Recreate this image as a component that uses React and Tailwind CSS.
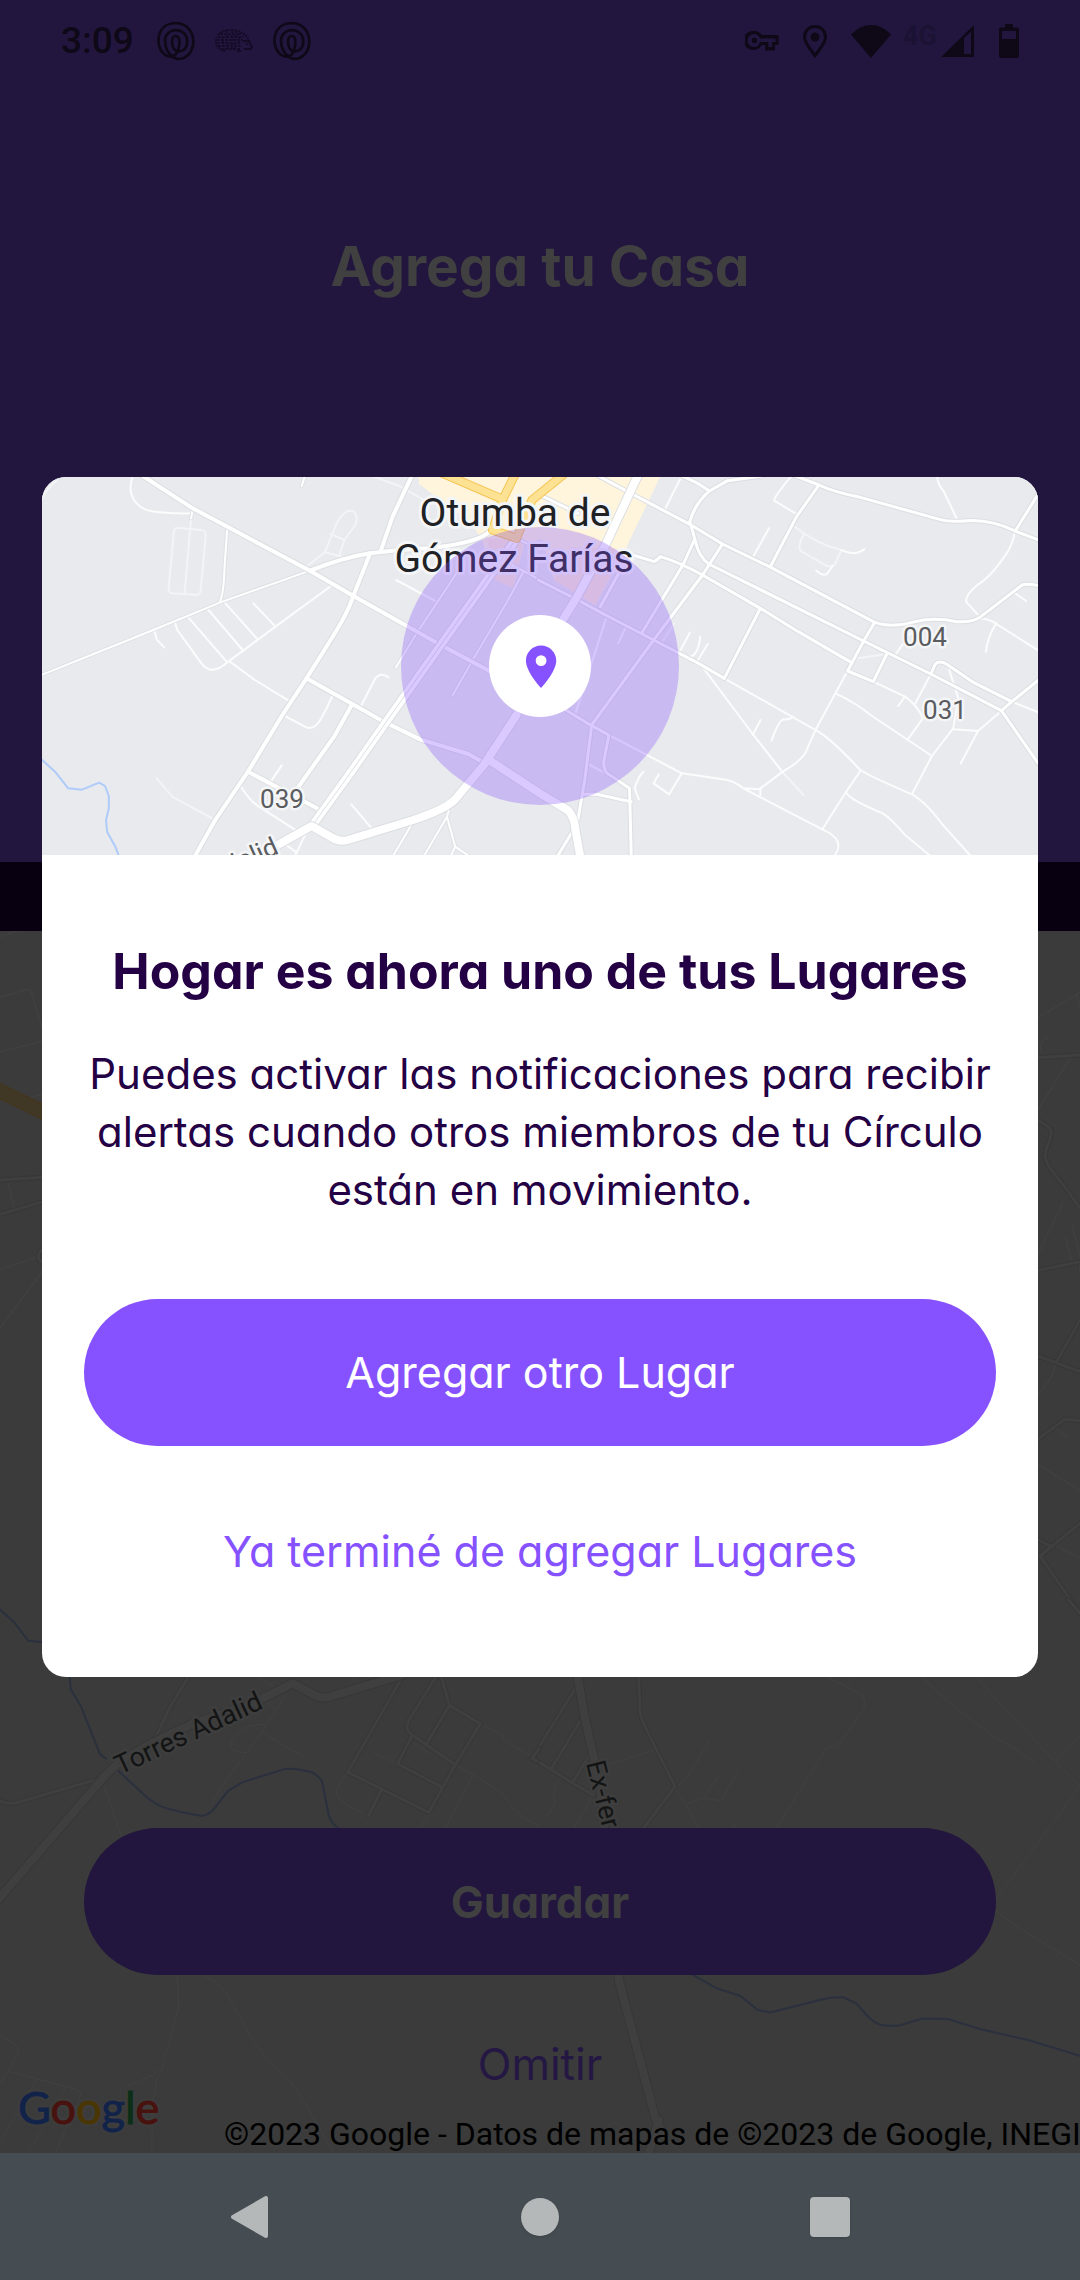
import React from 'react';

const ROBOTO = "font-['Roboto',sans-serif]";
const BRAND = "font-['Inter',sans-serif] [font-feature-settings:'cv11']";

function Roads({ paths, color, casing, width, transform }) {
  return (
    <g transform={transform} fill="none" strokeLinejoin="round" strokeLinecap="round">
      {casing && paths.map((d, i) => (
        <path key={'c' + i} d={d} stroke={casing} strokeWidth={width + 2} vectorEffect="non-scaling-stroke" />
      ))}
      {paths.map((d, i) => (
        <path key={i} d={d} stroke={color} strokeWidth={width} vectorEffect="non-scaling-stroke" />
      ))}
    </g>
  );
}

/* ---------- street data for the place preview ---------- */
const WEST = 'translate(-42 -17) scale(0.34436 0.33333)';
const EAST = 'translate(498 -17) scale(0.34436 0.33333)';

const westMain = [
  'M410 45 L560 145 L900 332 L1025 407 L1280 555 L1425 635',
  'M1197 45 L1140 170 L1105 275',
  'M1075 280 L1025 410 Q1010 460 960 540 L890 655 L820 765 L720 935 L625 1080 L565 1190',
  'M900 332 Q1000 292 1075 280 Q1150 270 1240 265 Q1390 250 1425 212',
  'M890 655 L1120 788 L1220 838 L1360 882 L1405 908',
  'M720 935 L930 1050',
  'M1020 737 L970 830 L860 990',
];
const westMid = [
  'M1335 325 L1210 520 L1150 622',
  'M1520 335 L1470 430 L1370 605 L1315 705',
  'M1480 310 L1568 360 M1500 235 L1568 270',
  'M1200 1085 L1140 1190 M1298 1070 L1230 1190',
  'M1308 1035 L1298 1070 L1322 1160 L1365 1190 M1322 1160 L1308 1190',
  'M120 645 L445 510 L640 427 L900 332',
  'M660 205 L652 320 Q650 400 638 427',
  'M560 145 L555 175 M885 50 L876 78',
];
const westThin = [
  'M385 50 C365 110 400 150 450 155 Q500 162 555 160',
  'M965 375 L800 500 L660 607 Q615 650 585 610 L515 510 L508 488',
  'M545 470 L660 607 M603 447 L707 573 M652 427 L748 538 M736 430 L800 500',
  'M448 510 L455 538 L477 562',
  'M668 605 L740 660 L842 724',
  'M822 765 L890 802 Q912 810 930 780 Q950 745 965 708',
  'M1045 745 L1090 655 Q1105 635 1128 652',
  'M785 967 L818 916 M700 980 Q730 1030 760 1045 L870 1118 M1020 1033 L1077 1102',
  'M1150 360 L1272 427 M835 1158 L862 1178 M888 1120 L858 1185',
];
const westFaint = [
  'M515 203 L585 210 Q600 212 597 230 L583 390 Q582 405 568 404 L500 400 Q488 398 490 380 L505 215 Q507 203 515 203',
  'M555 175 L536 400',
  'M888 322 L943 277 L968 215 C1000 120 1050 150 1032 195 L1000 240 L985 287 M943 277 L1000 292 M960 222 L1000 240',
  'M455 955 L500 1010 L625 1080',
  'M1085 50 L1160 78 L1240 125 M120 120 Q135 85 165 62',
];
const eastMain = [
  'M170 48 L260 98 L430 190 L530 252 L670 322 L972 487 Q1020 505 1080 487 Q1140 470 1210 485 Q1255 488 1280 470 L1400 375 Q1415 370 1448 377',
  'M735 45 L810 75 Q850 95 930 112 L1160 178 Q1190 187 1240 182 Q1310 178 1380 213 L1448 240',
  'M412 48 Q455 65 492 93 L545 62 L645 48',
  'M492 93 Q450 130 435 185 Q442 210 450 238 Q460 290 490 312 L940 543 L1135 642 L1340 752 L1448 912',
  'M340 300 L350 290 Q400 305 472 345 L640 445 L750 515 L900 605',
  'M810 75 L745 170 L670 318',
  'M972 487 L940 543 L893 633 L968 665 L1007 582',
  'M640 445 L535 655',
  'M-5 360 L110 420 L190 465 L330 540 L455 607 L535 655',
  'M530 252 L472 345 L330 540 L150 795',
  'M448 240 L415 315 L295 520',
  'M1340 752 L1370 725 L1448 660 M1448 100 L1380 213',
  'M1135 642 L1148 612 Q1160 600 1180 612 L1260 668 L1370 725',
  'M270 285 L332 305 L350 290',
  'M130 1003 L165 1003 L265 1025',
  'M75 750 L150 797 L200 825 L185 905 Q185 930 195 940 L260 985 L265 1190',
  'M150 797 L130 960 L110 1080 M100 1105 L50 1190',
  'M250 300 L175 440 M0 105 L110 160',
];
const eastThin = [
  'M1380 213 Q1370 260 1355 280 Q1310 350 1270 375 Q1235 405 1237 425 L1277 470',
  'M1153 48 Q1155 75 1172 93 L1212 180',
  'M730 48 Q680 110 680 122 L750 165',
  'M408 55 L362 150 M665 205 L618 292 M1380 400 L1412 423',
  'M893 633 L800 810 L770 880 Q755 905 705 935 L640 985 L640 1005',
  'M475 625 L620 825 L705 937 M535 655 L800 810 Q840 830 930 930 Q960 950 1080 1003 Q1120 1025 1170 1095 L1250 1187',
  'M858 700 Q920 730 960 765 L1138 888 L1080 1003',
  'M968 665 L1060 710 Q1095 735 1112 775 L1068 838 M1060 710 L1040 738',
  'M1135 642 L1090 730 M1188 628 L1215 715 L1200 805 L1138 888 M1200 808 L1272 813 L1340 752 M1272 813 L1222 910',
  'M932 930 L888 997 L820 1108',
  'M888 997 Q900 1020 995 1060 Q1020 1075 1060 1125 L1133 1187',
  'M200 825 L412 940 L530 958 Q560 960 590 985 L820 1108 Q890 1140 855 1187 M590 985 L640 988',
  'M412 940 L375 1003 L330 970 L345 943 M300 935 Q285 950 275 985 L287 1018',
  'M735 770 Q725 780 705 778 Q690 790 672 842 M640 780 L618 825',
  'M875 270 Q910 290 942 268 M802 332 Q830 355 838 335 L850 318',
  'M1325 490 Q1300 530 1295 575 M1277 475 Q1310 478 1330 495 L1448 572 M1030 587 L1090 500',
  'M435 518 L405 577 M465 530 Q460 590 430 592 M487 552 L455 607 M1370 725 L1448 757',
  'M195 465 L100 770 M250 500 L227 550 M140 912 L190 940',
];
const eastFaint = [
  'M740 200 Q800 250 875 270 L855 315 Q840 325 820 310 L760 275 Q745 265 765 225',
  'M705 937 L765 1005 M390 490 L355 545 M890 600 L1007 582',
];

function PreviewMap() {
  return (
    <svg className="absolute inset-0 h-full w-full" viewBox="0 0 996 378" preserveAspectRatio="xMidYMid slice" aria-hidden="true">
      <rect width="996" height="378" fill="#e8eaed" />
      <path d="M377 0 H618 L584 71 L553 128 L512 103 L500 62 L482 66 L471 111 L450 101 L440 62 L428 45 L377 7Z" fill="#fef5dc" />
      <path d="M446 62 L482 62 L471 111 L450 101Z M528 70 L582 72 L553 128 L512 103Z" fill="#fcebd6" />
      <Roads transform={WEST} paths={westFaint} color="#f3f4f6" width={2} />
      <Roads transform={EAST} paths={eastFaint} color="#f3f4f6" width={2} />
      <Roads transform={WEST} paths={westThin} color="#fcfcfd" width={2} />
      <Roads transform={EAST} paths={eastThin} color="#fcfcfd" width={2} />
      <Roads transform={WEST} paths={westMid} color="#ffffff" casing="#dfe1e5" width={2} />
      <Roads transform={EAST} paths={eastMain} color="#ffffff" casing="#dcdee2" width={3} />
      <Roads transform={WEST} paths={westMain} color="#ffffff" casing="#dcdee2" width={4} />
      <Roads transform={WEST} paths={['M1500 235 L1280 555 L1120 788 L1020 935 L908 1095']} color="#ffffff" casing="#dcdee2" width={8} />
      <Roads transform={WEST} paths={['M1490 250 L1280 555 L1120 788 L1020 935 L912 1090']} color="#dcdee2" width={1} />
      <Roads transform={EAST} paths={['M285 45 L190 255 L105 415 L60 490']} color="#ffffff" casing="#dcdee2" width={8} />
      <Roads
        transform={WEST}
        paths={[
          'M780 1170 L905 1098 L965 1133 Q985 1147 1010 1140 L1200 1080 Q1290 1050 1320 1020 L1405 915 L1500 765',
          'M1420 900 L1568 1000 L1648 1050 Q1668 1070 1671 1110 L1685 1190',
        ]}
        color="#ffffff"
        casing="#dcdee2"
        width={8}
      />
      <Roads transform={WEST} paths={['M1285 40 L1460 118 L1495 45', 'M1460 118 L1430 210 L1500 235 L1545 120 L1635 45']} color="#fde293" casing="#f6c453" width={7} />
      <Roads transform={WEST} paths={['M120 898 L160 935 L198 985 L238 989 L288 968 L305 978 L316 1008 L316 1045 L308 1080 L311 1115 L335 1160 L346 1190']} color="#aecbfa" width={2} />
      <g className={ROBOTO} textAnchor="middle" stroke="#f4f5f7" strokeLinejoin="round" style={{ paintOrder: 'stroke' }}>
        <g fill="#202124" fontSize="39" strokeWidth="6">
          <text x="473" y="49">Otumba de</text>
          <text x="472" y="95">Gómez Farías</text>
        </g>
        <g fill="#5a5c60" fontSize="26" strokeWidth="5">
          <text x="240" y="331">039</text>
          <text x="883" y="169">004</text>
          <text x="903" y="242">031</text>
          <text x="238" y="376" textAnchor="end" transform="rotate(-24 238 376)">Torres Adalid</text>
        </g>
      </g>
    </svg>
  );
}

/* ---------- street data for the full map behind the dialog ---------- */
const SW = 'translate(0 669) scale(0.34436 0.43367)';
const SE = 'translate(540 669) scale(0.34436 0.43367)';
const LEFT_EDGE = 'translate(0 -11) scale(0.33333)';
const RIGHT_EDGE = 'translate(1030 -11) scale(0.33333)';
const RIGHT_EDGE_LOW = 'translate(1030 489) scale(0.33333)';
const ROAD = '#403f40';
const CASE = '#363736';

function BackgroundMap() {
  return (
    <svg className="absolute inset-0 h-full w-full" viewBox="0 0 1080 1222" preserveAspectRatio="xMidYMax slice" aria-hidden="true">
      <rect width="1080" height="1222" fill="#3a3b3a" />
      <Roads transform={LEFT_EDGE} color={ROAD} width={2} paths={['M0 50 L50 34', 'M0 232 L75 210 Q92 206 97 225 L130 335', 'M0 396 L130 362 M90 533 L130 522', 'M24 785 L43 868', 'M0 1048 L110 1013', 'M130 1050 L0 1225']} />
      <Roads transform={LEFT_EDGE} color={ROAD} casing={CASE} width={3} paths={['M0 780 L130 772', 'M0 883 L130 845', 'M130 985 Q100 1012 130 1030']} />
      <Roads transform={LEFT_EDGE} color="#403825" casing="#46351a" width={13} paths={['M-20 504 L150 586']} />
      <Roads transform={RIGHT_EDGE} color={ROAD} width={2} paths={['M20 295 L150 218 M140 225 L150 260', 'M50 353 L30 370 L38 412', 'M125 408 L20 575', 'M98 850 L20 1010', 'M125 908 L150 1010 M107 950 L125 1025', 'M150 1030 L150 1060', 'M78 1328 Q70 1380 20 1425', 'M78 1525 L112 1555']} />
      <Roads transform={RIGHT_EDGE} color={ROAD} casing={CASE} width={3} paths={['M20 413 L150 405', 'M20 600 C60 620 75 625 55 670 Q35 710 60 745 L110 808 L150 865', 'M20 1052 L150 1025', 'M150 1200 L78 1328 M20 1307 L150 1355', 'M20 1560 L105 1498 L150 1502']} />
      <Roads transform={RIGHT_EDGE_LOW} color={ROAD} width={2} paths={['M20 130 L150 212 M75 375 L150 415']} />
      <Roads transform={RIGHT_EDGE_LOW} color={ROAD} casing={CASE} width={3} paths={['M20 357 L68 382 M150 310 L30 408 L150 580']} />

      <Roads
        transform={SW}
        color="#424142"
        width={1}
        paths={[
          'M750 178 L805 205 M770 235 L800 252 M828 222 L790 270 L760 305 L700 370 Q640 430 612 473',
          'M770 286 L725 290 Q665 315 670 340 Q680 352 715 352 M760 305 L883 363',
          'M303 430 L352 545 M515 865 L519 937 Q500 1000 480 1050 Q470 1090 455 1105 L442 1170 L441 1280',
          'M592 865 Q640 885 660 910 L725 1003 Q765 1055 845 1110 Q880 1150 970 1277',
          'M0 1005 Q60 1025 55 1045 L0 1115 M25 1087 L215 1127 Q240 1133 232 1145 L160 1277',
          'M0 1250 L105 1108 M80 1277 L190 1125 M462 1085 Q440 1100 370 1120',
          'M1010 397 Q970 435 978 450 Q990 470 1057 493 M1087 352 L1155 378 M1200 330 L1250 355',
          'M1395 285 L1455 310 L1465 325 L1568 370 M1322 380 L1375 402 L1460 447 Q1500 500 1568 522 M1375 402 L1292 527 M1245 490 L1220 527',
          'M1020 178 L1035 190 M355 330 L370 350',
        ]}
      />
      <Roads
        transform={SW}
        color={ROAD}
        casing={CASE}
        width={3}
        paths={[
          'M547 178 L495 245 L450 320', 'M0 463 Q25 473 50 467 L290 412',
          'M1168 178 L1010 397 L1245 490 L1322 380 L1395 285 L1305 243 L1282 178',
          'M1265 178 L1185 280 Q1175 295 1195 310 L1322 380', 'M1305 243 L1240 330 M1195 315 L1155 378 L1285 432 M1108 437 L1070 497 M1568 340 L1545 365 L1568 375',
        ]}
      />
      <Roads transform={SW} color={ROAD} casing={CASE} width={8} paths={['M-10 695 L305 405 L345 375 Q420 335 560 285 L730 240 L850 192 L920 222 Q945 228 970 220 L1170 172']} />
      <Roads
        transform={SE}
        color="#424142"
        width={1}
        paths={[
          'M205 378 L335 345 M492 323 L435 400 Q420 425 390 430 L462 525 M425 470 L475 457 L525 463 L575 395 M475 457 L522 403',
          'M835 178 L925 215 Q950 225 940 250 L880 320 Q870 335 830 343 L688 525 M905 180 L890 195',
          'M1112 178 Q1160 225 1330 322 Q1370 335 1440 378', 'M1270 178 Q1330 240 1568 430 L1325 688 M1497 372 L1568 315', 'M1325 717 Q1360 742 1410 765 L1568 842',
          'M60 410 Q30 435 45 465 Q35 490 10 502 M150 455 L100 525', 'M195 1215 Q215 1195 240 1215 Q280 1230 270 1240 M145 1277 L185 1240 M350 1235 L418 1277', 'M570 515 L560 525',
        ]}
      />
      <Roads
        transform={SE}
        color={ROAD}
        casing={CASE}
        width={3}
        paths={['M287 178 L290 255 Q295 280 310 300 L392 430 L300 527', 'M102 205 L0 335 M120 275 L32 390 M0 375 L100 425 L155 450 M145 355 L95 420', 'M1535 0 L1568 30']}
      />
      <Roads transform={SE} color={ROAD} casing={CASE} width={8} paths={['M108 170 L130 270 L175 430 L230 880 L335 1195 L360 1235 M345 1200 L315 1277']} />
      <Roads transform={SW} color="#2b303e" width={2} paths={['M0 22 L42 52 L82 94 L122 97', 'M203 178 L205 205 L235 245 L290 355 L308 366', 'M345 395 L415 447 Q440 465 460 473 Q500 487 588 498 Q605 495 618 485 L662 440 L705 420 L825 390 Q850 386 905 397 Q925 405 935 418 L955 497 Q965 518 985 527']} />
      <Roads transform={SE} color="#2b303e" width={2} paths={['M445 865 L512 895 L582 913 L632 945 L668 951 L790 927 Q835 915 880 916 L918 930 L958 965 Q980 980 1005 982 L1040 982 L1110 965 L1185 966 L1280 990 L1420 1015 L1568 1051']} />
      <g className={ROBOTO} fill="#131414" fontSize="27" stroke="#3e3e3e" strokeWidth="5" strokeLinejoin="round" style={{ paintOrder: 'stroke' }}>
        <text x="120" y="844" transform="rotate(-25 120 844)">Torres Adalid</text>
        <text x="586" y="832" transform="rotate(76 586 832)">Ex-ferrocarril</text>
      </g>
    </svg>
  );
}

/* ---------- status bar icons ---------- */
function LoopIcon() {
  return (
    <svg className="h-10 w-10" viewBox="0 0 40 40" fill="none" stroke="currentColor" strokeWidth="2.6" strokeLinecap="round" aria-hidden="true">
      <path d="M22 30.5 C30 30 32 24 31 18 C29 6 10 6 9 19 C9 27 11 32 17 35.500" />
      <path d="M22 30.500 C15 29 14 14 20 15 C26 16 23 29 20 33 C18 36 13 37 8 33 C-2 24 1 2 20 2 C43 3 42 37 23 38 C20 38 18 37 16 35" />
    </svg>
  );
}

function HedgehogIcon() {
  return (
    <svg className="h-6 w-10" viewBox="0 0 40 24" fill="none" stroke="currentColor" strokeWidth="1.400" aria-hidden="true">
      <path strokeWidth="2" strokeDasharray="2 1" d="M11 22 C3 21 0 14 3 8 M4 6 C10 -1 22 0 28 4 C32 6 34 9 35 12" />
      <path strokeDasharray="3 1" d="M6 5 H26 M4 8 H29 M3 11 H29 M3 14 H27 M4 17 H27 M7 20 H26" />
      <path strokeDasharray="2 2" strokeWidth="1.500" d="M8 4 L10 21 M13 2 L14 22 M18 2 V20 M22 2 L21 22 M26 4 L25 21" />
      <path d="M29 12 H35 L38 18 L37 20 H30 M27 22 H23" strokeWidth="2" />
      <circle cx="33" cy="15" r="1" fill="currentColor" stroke="none" />
    </svg>
  );
}

function StatusBar() {
  return (
    <div className="flex h-[82px] items-center justify-between px-[61px] text-[#0e0817]">
      <div className="flex items-center gap-[18px]">
        <span className={`${ROBOTO} mr-1 text-[37px] leading-10 font-medium`}>3:09</span>
        <LoopIcon />
        <span className="text-[#150b26]"><HedgehogIcon /></span>
        <LoopIcon />
      </div>
      <div className="flex items-center">
        <svg className="mr-6 h-5 w-[34px]" viewBox="0 0 34 20" aria-hidden="true">
          <path fillRule="evenodd" fill="currentColor" d="M9 0 A10 9.500 0 1 0 17 14 H20 V19.500 H30 V14 H33.500 V4 H17 A10 10 0 0 0 9 0Z M9 3 C12 3 14 5 15 7.500 H30.500 V11 H27 V16 H23.500 V11 H15 C14 14 12 16 9 16 A6.500 6.500 0 0 1 9 3Z" />
          <circle cx="9.500" cy="9.500" r="2.700" fill="currentColor" />
        </svg>
        <svg className="mr-6 h-[33px] w-6" viewBox="0 0 24 33" aria-hidden="true">
          <path d="M12 1.500 C6 1.500 1.500 6 1.500 12 C1.500 18 8 25 12 30.500 C16 25 22.500 18 22.500 12 C22.500 6 18 1.500 12 1.500Z" fill="none" stroke="currentColor" strokeWidth="3" />
          <circle cx="12" cy="12" r="4.500" fill="currentColor" />
        </svg>
        <svg className="mr-3 h-[33px] w-10" viewBox="0 0 40 33" fill="currentColor" aria-hidden="true">
          <path d="M0 9.500 Q9 0 20 0 T40 9.500 L20 33Z" />
        </svg>
        <span className={`${ROBOTO} mr-1 self-start text-[27px] leading-6 font-bold text-[#1c1233]`}>4G</span>
        <svg className="mr-6 h-8 w-[34px]" viewBox="0 0 34 32" fill="currentColor" aria-hidden="true">
          <path fillRule="evenodd" d="M0 32 L33 0 V32Z M23 13 V29 H30 V6.500Z" />
        </svg>
        <svg className="h-[34px] w-5" viewBox="0 0 20 34" fill="currentColor" aria-hidden="true">
          <path fillRule="evenodd" d="M6 0 H14 V3.500 H18 Q20 3.500 20 5.500 V32 Q20 34 18 34 H2 Q0 34 0 32 V5.500 Q0 3.500 2 3.500 H6Z M3 7 V15 H17 V7Z" />
        </svg>
      </div>
    </div>
  );
}

function BackgroundScreen() {
  return (
    <div className="col-start-1 row-start-1 flex min-w-0 flex-col overflow-hidden">
      <header className="h-[862px] bg-[#22163f]">
        <StatusBar />
        <h1 className={`${BRAND} mt-[152px] text-center text-[55px] leading-16 font-bold text-[#404040]`}>Agrega tu Casa</h1>
      </header>
      <div className="h-[69px] bg-[#080011]" />
      <section className="relative flex flex-1 flex-col justify-end" aria-label="Mapa">
        <BackgroundMap />
        <div className={`${BRAND} relative flex flex-col px-[84px] text-[44px]`}>
          <button type="button" className="h-[147px] rounded-[74px] bg-[#22163f] font-bold text-[#404040]">Guardar</button>
          <button type="button" className="mt-16 self-center leading-[50px] text-[#241743]">Omitir</button>
        </div>
        <div className="relative flex h-16 items-end pl-[18px]">
          <div className="w-[206px] shrink-0 self-start font-['Lato',sans-serif] text-[45px] leading-9 [-webkit-text-stroke:1px_currentColor] [text-shadow:0_0_4px_#474647]" aria-label="Google">
            <span className="text-[#12234a]">G</span>
            <span className="text-[#48120e]">o</span>
            <span className="text-[#4a3604]">o</span>
            <span className="text-[#12234a]">g</span>
            <span className="text-[#0d2f17]">l</span>
            <span className="text-[#48120e]">e</span>
          </div>
          <p className={`${ROBOTO} text-[32px] leading-[38px] whitespace-nowrap text-black`}>©2023 Google - Datos de mapas de ©2023 de Google, INEGI</p>
        </div>
      </section>
    </div>
  );
}

function PlaceDialog() {
  return (
    <div role="dialog" aria-labelledby="dialog-title" className={`${BRAND} w-full overflow-hidden rounded-3xl bg-white text-center text-[#240045]`}>
      <div className="relative flex h-[378px] items-center justify-center">
        <PreviewMap />
        <div className="relative flex size-[278px] items-center justify-center rounded-full bg-[#8652ff]/31">
          <div className="flex size-[102px] items-center justify-center rounded-full bg-white">
            <svg className="size-[52px]" viewBox="0 0 24 24" fill="#8652ff" aria-hidden="true">
              <path d="M12.500 2.500C8.630 2.500 5.500 5.630 5.500 9.500c0 5.250 7 12.700 7 12.700s7-7.450 7-12.700c0-3.870-3.130-7-7-7zm0 9.500a2.500 2.500 0 1 1 0-5 2.500 2.500 0 0 1 0 5z" />
            </svg>
          </div>
        </div>
      </div>
      <div className="flex flex-col px-[42px] pt-[86px] pb-[52px] text-[43px]">
        <h2 id="dialog-title" className="text-[50px] leading-[60px] font-bold">Hogar es ahora uno de tus Lugares</h2>
        <p className="mt-11 text-[42px] leading-[58px]">
          Puedes activar las notificaciones para recibir<br />
          alertas cuando otros miembros de tu Círculo<br />
          están en movimiento.
        </p>
        <button type="button" className="mt-20 h-[147px] rounded-[74px] bg-[#8652ff] text-white">Agregar otro Lugar</button>
        <button type="button" className="mt-8 h-[147px] text-[#8652ff]">Ya terminé de agregar Lugares</button>
      </div>
    </div>
  );
}

function NavigationBar() {
  return (
    <nav className="flex h-[127px] items-center justify-around bg-[#454c52] px-[105px] text-[#b4b8b9]" aria-label="Sistema">
      <button type="button" aria-label="Atrás">
        <svg className="h-[44px] w-10" viewBox="0 0 40 44" fill="currentColor" stroke="currentColor" strokeWidth="4" strokeLinejoin="round" aria-hidden="true"><path d="M3 22 L36 3 V41Z" /></svg>
      </button>
      <button type="button" aria-label="Inicio" className="size-[38px] rounded-full bg-[#b4b8b9] shadow" />
      <button type="button" aria-label="Recientes" className="size-10 rounded-sm bg-[#b4b8b9] shadow" />
    </nav>
  );
}

export default function App() {
  return (
    <div className="flex min-h-screen flex-col overflow-hidden">
      <main className="grid flex-1 grid-cols-1">
        <BackgroundScreen />
        <div className="relative col-start-1 row-start-1 flex items-center px-[42px]">
          <PlaceDialog />
        </div>
      </main>
      <NavigationBar />
    </div>
  );
}
